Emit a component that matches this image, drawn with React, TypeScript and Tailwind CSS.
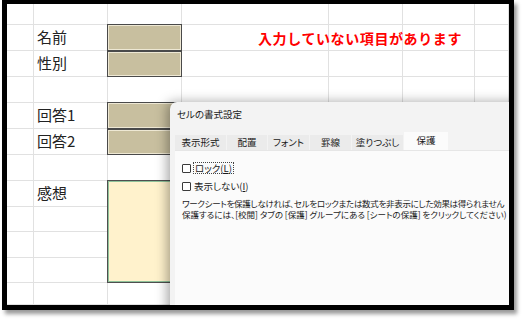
import React from 'react'

const ROWS = 12
const COLS = 7

const labels: Record<number, string> = {
  2: '名前',
  3: '性別',
  5: '回答1',
  6: '回答2',
  8: '感想',
}

function TanCell() {
  return (
    <div className="flex-1 border border-[#4a4a4a] bg-[#c8bf9f] shadow-[inset_0_0_0_1px_#eee8d4]" />
  )
}

function Checkbox() {
  return <span className="inline-block w-[9px] h-[9px] border border-[#3a3a3a] bg-white rounded-[1px] shrink-0" />
}

function FormatDialog() {
  const tabs = [
    { label: '表示形式', w: 'w-[51px]' },
    { label: '配置', w: 'w-[40px]' },
    { label: 'フォント', w: 'w-[41px]' },
    { label: '罫線', w: 'w-[41px]' },
    { label: '塗りつぶし', w: 'w-[51px]' },
  ]

  return (
    <div className="absolute left-[163px] top-[98px] w-[380px] h-[240px] bg-[#f3f3f3] rounded-tl-[7px] shadow-[-3px_0_12px_rgba(0,0,0,0.35)] text-[#1a1a1a] font-['Noto_Sans_CJK_JP',sans-serif] [font-feature-settings:'palt']">
      {/* title */}
      <div className="h-[30px] pl-[7px] pt-[5px] text-[9.5px] leading-[14px]">セルの書式設定</div>

      {/* tabs */}
      <div className="flex items-end gap-px pl-[5px] h-[18px]">
        {tabs.map((t) => (
          <div key={t.label} className={`${t.w} h-[15px] bg-[#ebebeb] flex items-center justify-center text-[9.5px] leading-none`}>
            {t.label}
          </div>
        ))}
        <div className="w-[44px] h-[18px] bg-[#fbfbfb] flex items-center justify-center text-[9.5px] leading-none">保護</div>
      </div>

      {/* panel */}
      <div className="ml-[5px] h-[200px] bg-[#fbfbfb] border-t border-[#e6e6e6] pl-[7px] pt-[11px] text-[9.5px]">
        <div className="flex items-center gap-[2px] h-[12px]">
          <Checkbox />
          <span className="border border-dotted border-[#444] px-[1px] leading-[10px]">
            ロック(<span className="underline">L</span>)
          </span>
        </div>
        <div className="flex items-center gap-[3px] h-[12px] mt-[6px]">
          <Checkbox />
          <span className="leading-[10px]">
            表示しない(<span className="underline">I</span>)
          </span>
        </div>
        <div className="mt-[6px] text-[8.5px] leading-[11px] whitespace-nowrap">
          <div className="tracking-[-0.3px]">ワークシートを保護しなければ、セルをロックまたは数式を非表示にした効果は得られません</div>
          <div className="tracking-[0px]">保護するには、[校閲] タブの [保護] グループにある [シートの保護] をクリックしてください)</div>
        </div>
      </div>
    </div>
  )
}

export default function App() {
  const cells = []
  for (let r = 1; r <= ROWS; r++) {
    for (let c = 1; c <= COLS; c++) {
      cells.push(
        <div
          key={`${r}-${c}`}
          className="border-r border-b border-[#e1e1e1] flex items-center pl-[3px] text-[15px] text-[#222]"
          style={{ gridRow: r, gridColumn: c }}
        >
          {c === 2 && labels[r]}
        </div>
      )
    }
  }

  return (
    <div className="w-[522px] h-[320px] bg-white">
      <div className="ml-[2px] w-[512px] h-[310px] border-black border-x-[5px] border-t-[4px] border-b-[5px] shadow-[3px_4px_4px_rgba(0,0,0,0.4)]">
        <div className="relative w-full h-full overflow-hidden bg-white font-['Noto_Sans_CJK_JP',sans-serif]">
          <div className="grid grid-cols-[27px_74px_74px_147px_74px_72px_34px] grid-rows-[21px_26px_26px_26px_26px_26px_26px_26px_25px_26px_25px_22px]">
            {cells}

            {/* name / gender inputs */}
            <div className="col-start-3 row-start-2 row-span-2 flex flex-col -mt-px -ml-px">
              <TanCell />
              <TanCell />
            </div>

            {/* answers */}
            <div className="col-start-3 row-start-5 row-span-2 flex flex-col -mt-px -ml-px">
              <TanCell />
              <TanCell />
            </div>

            {/* impressions */}
            <div className="col-start-3 row-start-8 row-span-4 -mt-px -ml-px border border-[#4f4f4f] bg-[#fff2cc]">
              <div className="w-full h-full border border-[#8fc29a] border-r-0" />
            </div>

            {/* warning */}
            <div className="col-start-4 col-span-4 row-start-2 flex items-center pl-[76px] text-[14px] font-bold tracking-[0.6px] text-[#ff0000] whitespace-nowrap">
              入力していない項目があります
            </div>
          </div>

          <FormatDialog />
        </div>
      </div>
    </div>
  )
}
